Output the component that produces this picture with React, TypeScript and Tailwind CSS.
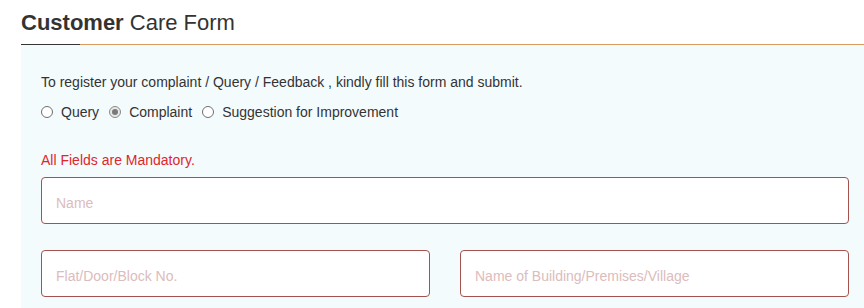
const styles = {
	input: "w-full h-[47px] rounded-[4px] border border-[#a3524e] bg-white px-[14px] pt-[4px] text-[14px] text-[#333] placeholder:text-[#dcbcbc] outline-none",
	radioLabel: "flex flex-row items-center gap-[8px] text-[14px] text-[#333]",
};

function Radio({ checked }: { checked?: boolean }) {
	return (
		<span className={"flex items-center justify-center w-[12px] h-[12px] rounded-full border " + (checked ? "border-[#8a8a8a] bg-[#e8e8e8]" : "border-[#6f6f6f] bg-white")}>
			{checked && <span className="w-[6px] h-[6px] rounded-full bg-[#7a7a7a]"></span>}
		</span>
	);
}

export default function App() {
	const options = [
		{ label: "Query", checked: false },
		{ label: "Complaint", checked: true },
		{ label: "Suggestion for Improvement", checked: false },
	];

	return (
		<div className="w-[864px] h-[308px] overflow-hidden bg-white font-['Liberation_Sans',Arial,sans-serif]">
			<div className="ml-[21px] w-[848px]">
				<h1 className="pt-[10px] pb-[8px] h-[44px] text-[22px] leading-[26px] text-[#333]">
					<span className="font-bold">Customer</span> Care Form
				</h1>
				<div className="flex flex-row h-px">
					<div className="w-[59px] bg-[#333]"></div>
					<div className="flex-1 bg-[#d99b5e]"></div>
				</div>
				<form className="flex flex-col bg-[#f3fbfd] px-[20px] pt-[27px] pb-[40px]">
					<p className="text-[14px] leading-[20px] text-[#333]">
						To register your complaint / Query / Feedback , kindly fill this form and submit.
					</p>
					<div className="flex flex-row items-center gap-[10px] mt-[10px] h-[20px] leading-[20px]">
						{options.map((option, index) => (
							<label key={index} className={styles.radioLabel}>
								<Radio checked={option.checked} />
								<span>{option.label}</span>
							</label>
						))}
					</div>
					<p className="mt-[28px] text-[14px] leading-[20px] text-[#e0262a]">All Fields are Mandatory.</p>
					<input type="text" placeholder="Name" className={styles.input + " mt-[7px]"} />
					<div className="grid grid-cols-2 gap-[30px] mt-[26px]">
						<input type="text" placeholder="Flat/Door/Block No." className={styles.input} />
						<input type="text" placeholder="Name of Building/Premises/Village" className={styles.input} />
					</div>
				</form>
			</div>
		</div>
	);
}
